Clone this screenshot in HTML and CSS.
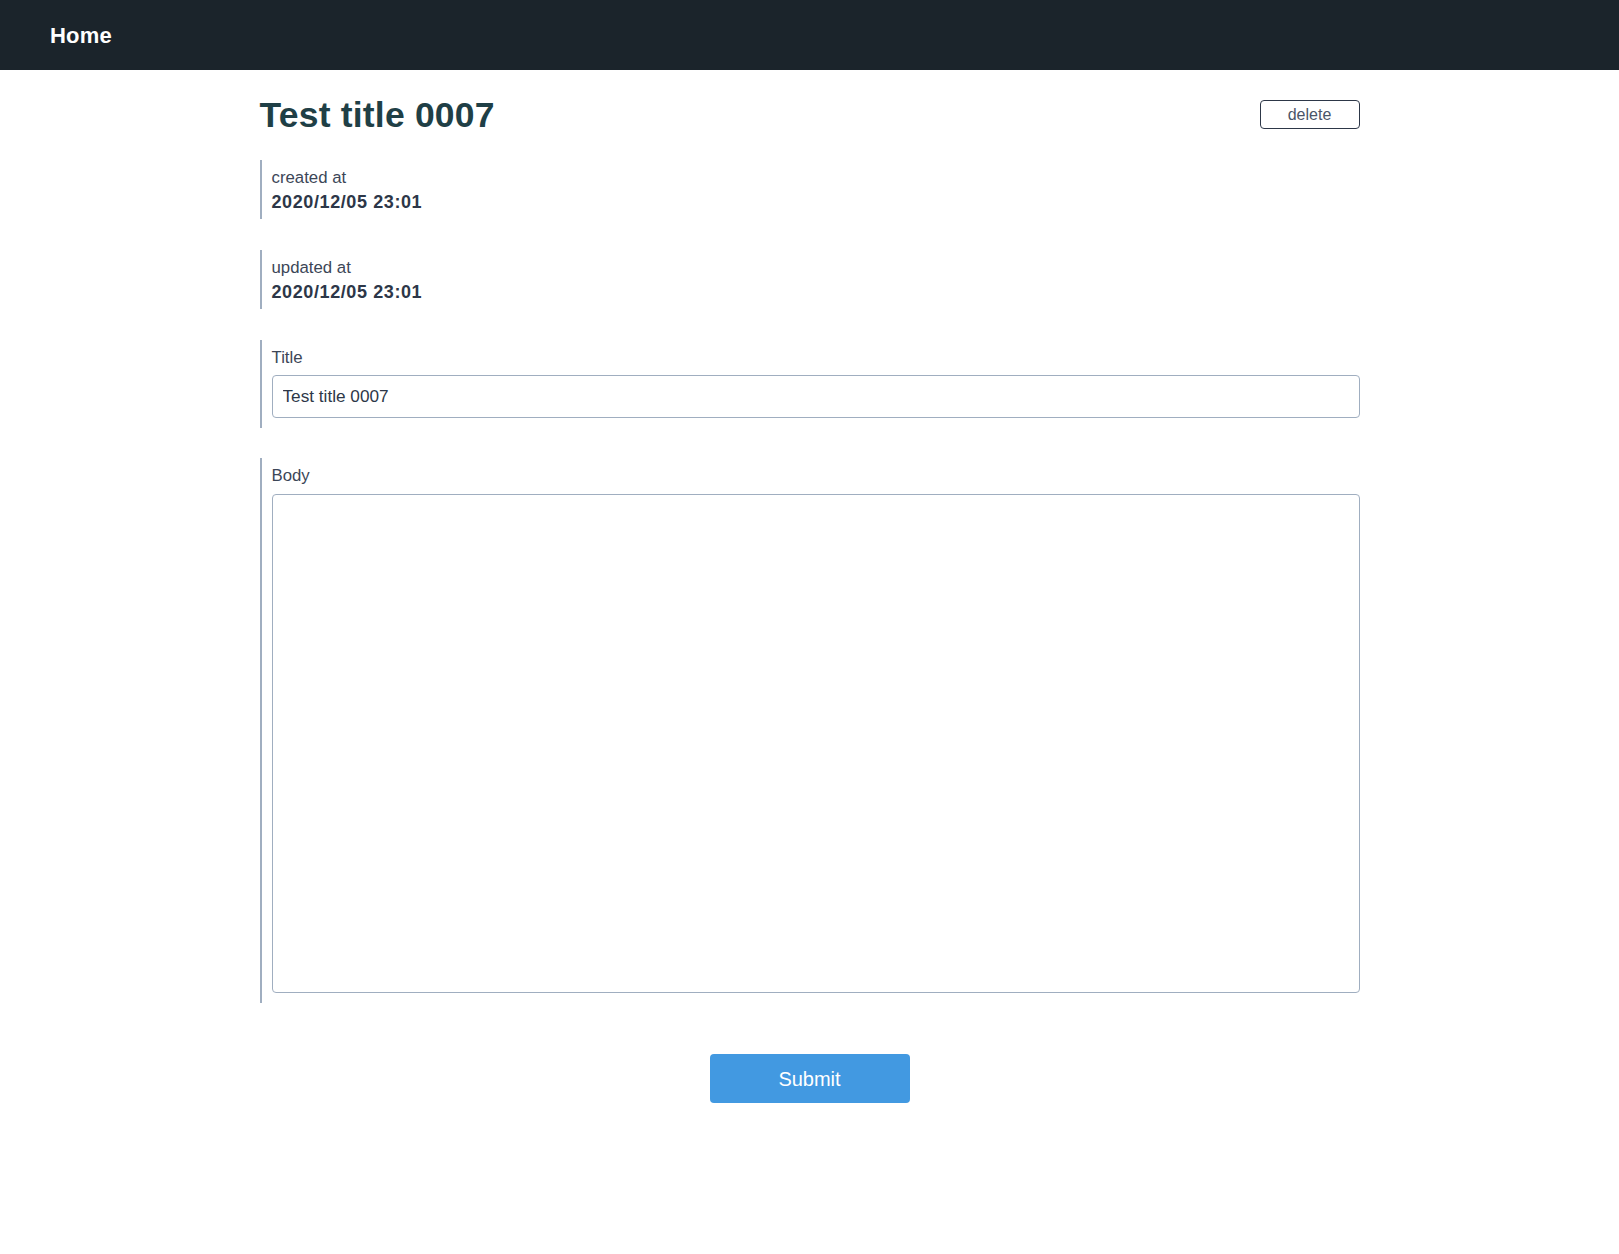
FILE: index.html
```
<!DOCTYPE html>
<html lang="en">
<head>
<meta charset="utf-8">
<title>Test title 0007</title>
<link rel="stylesheet" href="styles.css">
</head>
<body>
<header class="navbar">
  <a class="brand" href="#">Home</a>
</header>
<main class="container">
  <div class="title-row">
    <h1 class="page-title">Test title 0007</h1>
    <button class="btn-delete" type="button">delete</button>
  </div>
  <div class="field">
    <div class="label">created at</div>
    <div class="value">2020/12/05 23:01</div>
  </div>
  <div class="field">
    <div class="label">updated at</div>
    <div class="value">2020/12/05 23:01</div>
  </div>
  <div class="field field-input">
    <label class="label" for="title">Title</label>
    <input class="text-input" id="title" type="text" value="Test title 0007">
  </div>
  <div class="field field-input">
    <label class="label" for="body">Body</label>
    <textarea class="text-area" id="body"></textarea>
  </div>
  <div class="actions">
    <button class="btn-submit" type="submit">Submit</button>
  </div>
</main>
</body>
</html>
```

FILE: styles.css
```
* { box-sizing: border-box; }
html, body { margin: 0; padding: 0; background: #ffffff; }
body {
  font-family: "Liberation Sans", Arial, sans-serif;
  color: #2d3748;
}
.navbar {
  height: 70px;
  background: #1b242b;
  display: flex;
  align-items: center;
  padding-left: 50px;
  padding-top: 1px;
}
.brand {
  color: #ffffff;
  font-size: 22px;
  font-weight: bold;
  text-decoration: none;
  letter-spacing: 0.2px;
}
.container {
  max-width: 1100px;
  margin: 0 auto;
}
.title-row {
  display: flex;
  align-items: center;
  justify-content: space-between;
  height: 90px;
  padding-bottom: 1px;
}
.page-title {
  margin: 0;
  font-size: 35.5px;
  font-weight: bold;
  color: #1f3f46;
  line-height: 40px;
  letter-spacing: 0.2px;
}
.btn-delete {
  width: 100px;
  height: 29px;
  background: #ffffff;
  border: 1px solid #2d3748;
  border-radius: 4px;
  font-family: "Liberation Sans", Arial, sans-serif;
  font-size: 16px;
  color: #4a5568;
  padding: 0;
  cursor: pointer;
}
.field {
  border-left: 2px solid #a0aec0;
  padding: 5px 0 4px 10px;
  margin-bottom: 31px;
  font-size: 16.8px;
  line-height: 25px;
}
.label {
  display: block;
  color: #3c4657;
}
.value {
  font-weight: bold;
  font-size: 18px;
  color: #2d3748;
  letter-spacing: 0.6px;
}
.field-input {
  padding-bottom: 10px;
  margin-bottom: 30px;
}
.text-input {
  display: block;
  width: 100%;
  height: 43px;
  margin-top: 5px;
  border: 1px solid #a0aec0;
  border-radius: 4px;
  padding: 0 10px;
  font-family: "Liberation Sans", Arial, sans-serif;
  font-size: 17.2px;
  color: #2d3748;
  outline: none;
}
.text-area {
  display: block;
  width: 100%;
  height: 499px;
  margin-top: 6px;
  border: 1px solid #a0aec0;
  border-radius: 4px;
  padding: 10px;
  font-family: "Liberation Sans", Arial, sans-serif;
  font-size: 17px;
  resize: none;
  outline: none;
}
.actions {
  display: flex;
  justify-content: center;
  padding-top: 21px;
}
.btn-submit {
  width: 200px;
  height: 49px;
  background: #4299e1;
  color: #ffffff;
  border: none;
  border-radius: 4px;
  font-family: "Liberation Sans", Arial, sans-serif;
  font-size: 20px;
  padding-top: 2px;
  cursor: pointer;
}
```
